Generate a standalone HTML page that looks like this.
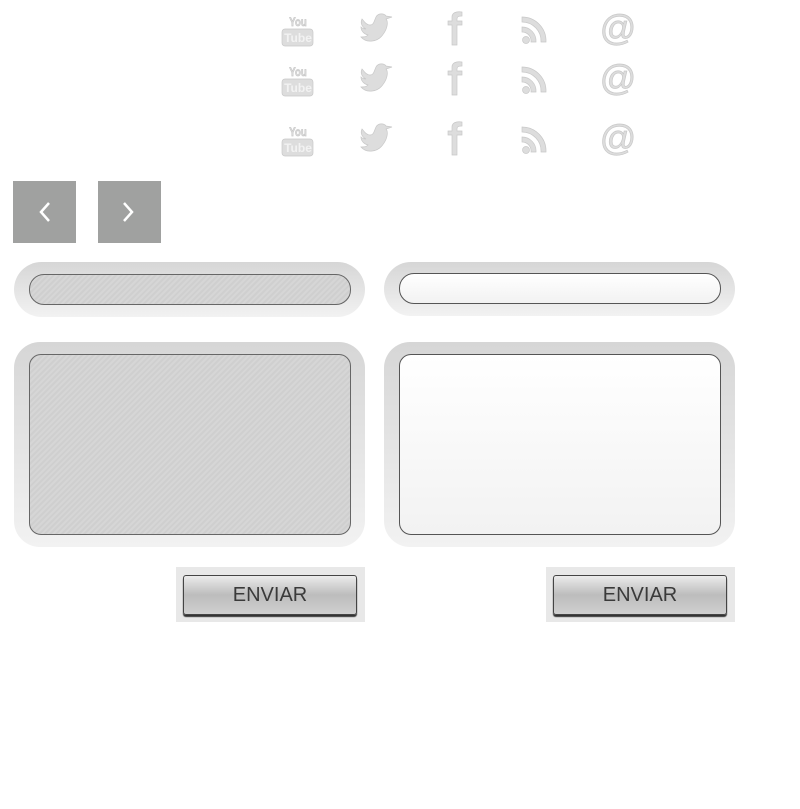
<!DOCTYPE html><html><head><style>
body{margin:0;width:800px;height:809px;background:#fff;position:relative;font-family:"Liberation Sans",sans-serif;overflow:hidden}
.a{position:absolute}
.sq{background:#a0a1a0;width:63px;height:62px;top:181px}
.ow{background:linear-gradient(#d6d6d6,#f2f2f2);}
.in1{border:1px solid #666;background:repeating-linear-gradient(135deg,#cfcfcf 0 2px,#d6d6d6 2px 4px)}
.in2{border:1px solid #555;background:linear-gradient(#fff,#f2f2f2)}
.bc{background:#e8e8e8;width:189px;height:55px;top:567px}
.bt{width:172px;height:38px;top:575px;border:1px solid #444;border-radius:3px;background:linear-gradient(#ebebeb,#bcbcbc 50%,#cfcfcf);box-shadow:0 2px 1px #333;text-align:center;line-height:38px;font-size:20px;color:#3a3a3a;font-family:"Liberation Sans",sans-serif}
</style></head><body>
<div class="a sq" style="left:13px"><svg width="63" height="62"><path d="M36 22 L28 31 L36 40" stroke="#fff" stroke-width="2.5" fill="none"/></svg></div>
<div class="a sq" style="left:98px"><svg width="63" height="62"><path d="M26 22 L34 31 L26 40" stroke="#fff" stroke-width="2.5" fill="none"/></svg></div>

<div class="a ow" style="left:14px;top:262px;width:351px;height:55px;border-radius:28px"></div>
<div class="a in1" style="left:29px;top:274px;width:320px;height:29px;border-radius:15px"></div>
<div class="a ow" style="left:384px;top:262px;width:351px;height:54px;border-radius:28px"></div>
<div class="a in2" style="left:399px;top:273px;width:320px;height:29px;border-radius:15px"></div>

<div class="a ow" style="left:14px;top:342px;width:351px;height:205px;border-radius:26px"></div>
<div class="a in1" style="left:29px;top:354px;width:320px;height:179px;border-radius:12px"></div>
<div class="a ow" style="left:384px;top:342px;width:351px;height:205px;border-radius:26px"></div>
<div class="a in2" style="left:399px;top:354px;width:320px;height:179px;border-radius:12px"></div>

<div class="a bc" style="left:176px"></div><div class="a bt" style="left:183px">ENVIAR</div>
<div class="a bc" style="left:546px"></div><div class="a bt" style="left:553px">ENVIAR</div>

<svg class="a" style="left:270px;top:0" width="380" height="170">
<defs><g id="row" fill="#ddd" stroke="#c8c8c8" stroke-width="0.7">
<text x="28" y="-3" font-size="12" font-family="Liberation Sans" font-weight="bold" text-anchor="middle" transform="scale(0.8,1) translate(7,0)">You</text>
<rect x="12" y="0" width="31" height="17" rx="3"/>
<text x="28" y="13" font-size="12" fill="#f2f2f2" stroke="none" font-family="Liberation Sans" font-weight="bold" text-anchor="middle">Tube</text>
<path d="M91 8 C96 14 108 14 114 4 C118 -2 118 -8 116 -10 L122 -12 L116 -13 C114 -16 108 -16 106 -12 C104 -8 104 -4 100 -4 C96 -4 94 -8 92 -10 C90 -6 92 -2 96 0 C93 0 92 -1 91 -2 C91 2 94 5 98 6 C96 8 94 8 91 8Z"/>
<path d="M182 16 V-4 H178 V-8 H182 V-12 C182 -16 186 -18 192 -17 V-13 C188 -13 187 -12 187 -10 V-8 H192 V-4 H187 V16 Z"/>
<circle cx="256" cy="11" r="3.5"/>
<path d="M252 -2 A14 14 0 0 1 266 13 H261 A9 9 0 0 0 252 3Z M252 -12 A24 24 0 0 1 276 13 H271 A19 19 0 0 0 252 -7Z"/>
<text x="348" y="11" font-size="36" font-family="Liberation Sans" text-anchor="middle">@</text>
</g></defs>
<use href="#row" y="29"/><use href="#row" y="79"/><use href="#row" y="139"/>
</svg>
</body></html>
